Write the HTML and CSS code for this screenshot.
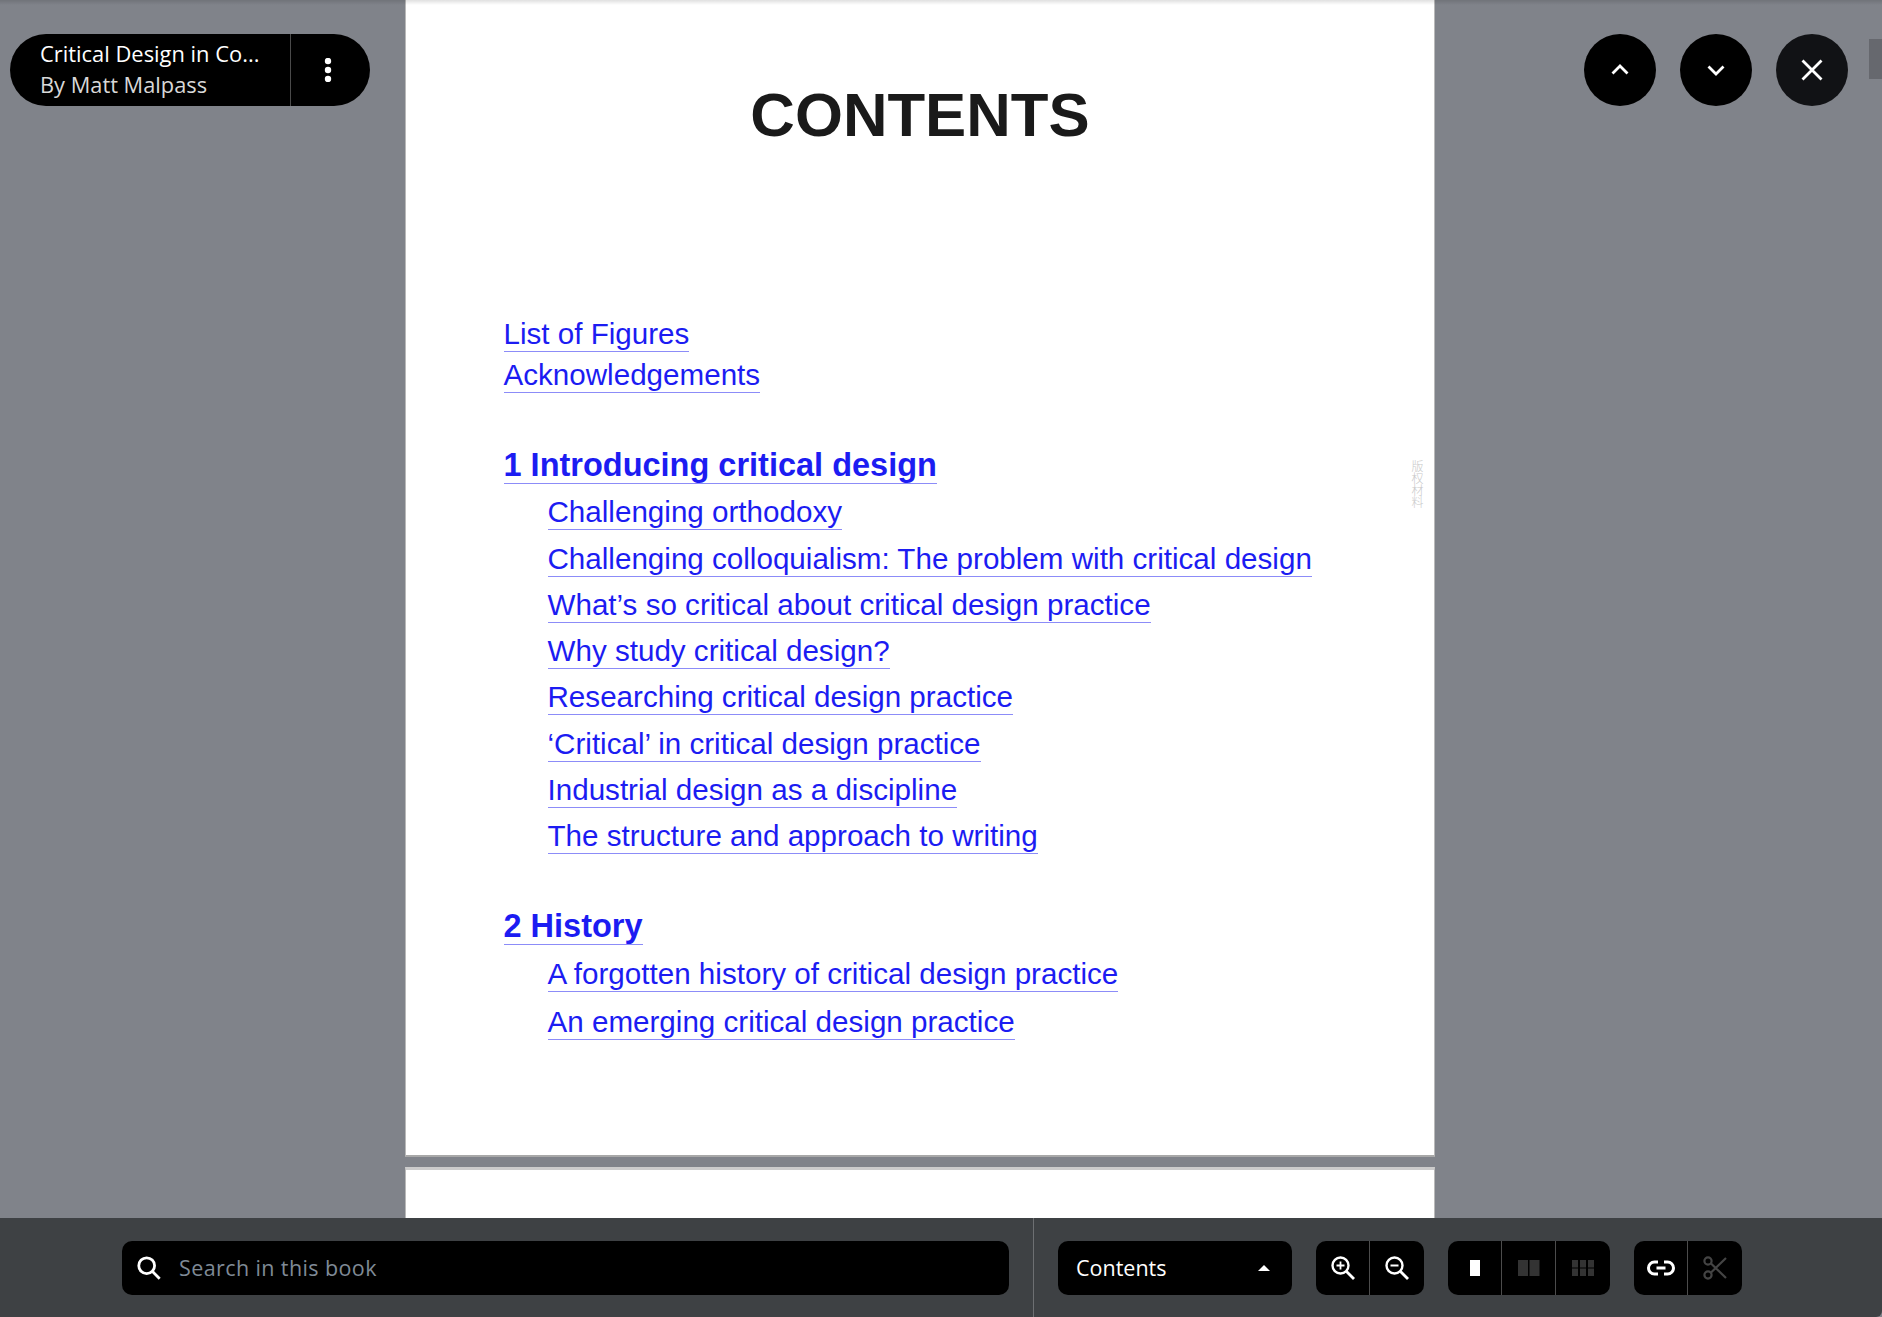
FILE: index.html
```html
<!DOCTYPE html>
<html lang="en">
<head>
<meta charset="utf-8">
<title>Critical Design in Context</title>
<link rel="stylesheet" href="styles.css">
</head>
<body>
<div class="viewer">
  <main class="stage">
    <section class="page page-first">
      <h1 class="title">CONTENTS</h1>
      <nav class="toc">
        <div class="front">
          <a class="link" href="#">List of Figures</a>
          <a class="link" href="#">Acknowledgements</a>
        </div>
        <div class="chapter chapter-one">
          <a class="link chap" href="#">1 Introducing critical design</a>
          <a class="link sub" href="#">Challenging orthodoxy</a>
          <a class="link sub" href="#">Challenging colloquialism: The problem with critical design</a>
          <a class="link sub" href="#">What’s so critical about critical design practice</a>
          <a class="link sub" href="#">Why study critical design?</a>
          <a class="link sub" href="#">Researching critical design practice</a>
          <a class="link sub" href="#">‘Critical’ in critical design practice</a>
          <a class="link sub" href="#">Industrial design as a discipline</a>
          <a class="link sub" href="#">The structure and approach to writing</a>
        </div>
        <div class="chapter chapter-two">
          <a class="link chap" href="#">2 History</a>
          <a class="link sub" href="#">A forgotten history of critical design practice</a>
          <a class="link sub" href="#">An emerging critical design practice</a>
        </div>
      </nav>
      <span class="watermark">版权材料</span>
    </section>
    <section class="page page-next"></section>

    <div class="book-pill">
      <div class="book-info">
        <div class="book-title">Critical Design in Co...</div>
        <div class="book-author">By Matt Malpass</div>
      </div>
      <button class="pill-menu" aria-label="More">
        <svg width="24" height="24" viewBox="0 0 24 24"><circle cx="12" cy="3" r="3.200" class="dot"/><circle cx="12" cy="12" r="3.200" class="dot"/><circle cx="12" cy="21" r="3.200" class="dot"/></svg>
      </button>
    </div>

    <div class="round-buttons">
      <button class="round" aria-label="Previous">
        <svg width="24" height="24" viewBox="0 0 24 24"><path d="M4.500 15.500l7.500-7.500 7.500 7.500" class="stroke" stroke-width="2.800"/></svg>
      </button>
      <button class="round" aria-label="Next">
        <svg width="24" height="24" viewBox="0 0 24 24"><path d="M4.500 8.500l7.500 7.500 7.500-7.500" class="stroke" stroke-width="2.800"/></svg>
      </button>
      <button class="round round-close" aria-label="Close">
        <svg width="24" height="24" viewBox="0 0 24 24"><path d="M2.500 2.500l19 19M21.500 2.500l-19 19" class="stroke" stroke-width="2.800"/></svg>
      </button>
    </div>
    <div class="scroll-thumb"></div>
  </main>

  <footer class="bar">
    <div class="search">
      <svg width="26" height="26" viewBox="0 0 28 28"><circle cx="11.500" cy="11.500" r="8.500" class="stroke" stroke-width="3"/><path d="M17.500 17.500L25.500 25.500" class="stroke" stroke-width="3"/></svg>
      <span class="search-text">Search in this book</span>
    </div>
    <div class="bar-divider"></div>
    <div class="select">
      <span>Contents</span>
      <span class="caret"></span>
    </div>
    <div class="group">
      <button class="tool" aria-label="Zoom in">
        <svg width="24" height="24" viewBox="0 0 24 24"><circle cx="9.500" cy="9.500" r="8" class="stroke" stroke-width="2.400"/><path d="M15.500 15.500L23 23" class="stroke" stroke-width="2.800"/><path d="M9.500 5.500v8M5.500 9.500h8" class="stroke" stroke-width="1.800"/></svg>
      </button>
      <button class="tool" aria-label="Zoom out">
        <svg width="24" height="24" viewBox="0 0 24 24"><circle cx="9.500" cy="9.500" r="8" class="stroke" stroke-width="2.400"/><path d="M15.500 15.500L23 23" class="stroke" stroke-width="2.800"/><path d="M5.500 9.500h8" class="stroke" stroke-width="2"/></svg>
      </button>
    </div>
    <div class="group">
      <button class="tool" aria-label="Single page">
        <svg width="22" height="18" viewBox="0 0 22 18"><rect x="6" y="1" width="10" height="16" fill="#fff"/></svg>
      </button>
      <button class="tool" aria-label="Two pages">
        <svg width="22" height="18" viewBox="0 0 22 18"><rect x="0" y="1" width="10" height="16" class="dim"/><rect x="11.500" y="1" width="10" height="16" class="dim"/></svg>
      </button>
      <button class="tool" aria-label="Grid">
        <svg width="22" height="18" viewBox="0 0 22 18"><rect x="0" y="1" width="6" height="7.500" class="dim"/><rect x="8" y="1" width="6" height="7.500" class="dim"/><rect x="16" y="1" width="6" height="7.500" class="dim"/><rect x="0" y="9.500" width="6" height="7.500" class="dim"/><rect x="8" y="9.500" width="6" height="7.500" class="dim"/><rect x="16" y="9.500" width="6" height="7.500" class="dim"/></svg>
      </button>
    </div>
    <div class="group">
      <button class="tool" aria-label="Copy link">
        <svg width="30" height="18" viewBox="0 0 30 18"><path d="M12 3H8.500a6 6 0 0 0 0 12H12M18 3h3.500a6 6 0 0 1 0 12H18" class="stroke" stroke-width="3"/><path d="M10.500 9h9" class="stroke" stroke-width="2.800"/></svg>
      </button>
      <button class="tool" aria-label="Clip">
        <svg width="26" height="26" viewBox="0 0 26 26"><circle cx="6" cy="6" r="3.600" class="stroke-dim" stroke-width="2.200"/><circle cx="6" cy="20" r="3.600" class="stroke-dim" stroke-width="2.200"/><path d="M9 8.500L24 23M9 17.500L24 3" class="stroke-dim" stroke-width="2.200"/></svg>
      </button>
    </div>
  </footer>
</div>
</body>
</html>
```
FILE: styles.css
```css
* { box-sizing: border-box; }
html, body { margin: 0; height: 100%; }
body { overflow: hidden; font-family: "Open Sans", "Noto Sans", sans-serif; }

.viewer { display: flex; flex-direction: column; height: 1317px; background: #80838a; }

.stage { position: relative; flex: 1; min-height: 0; overflow: hidden; display: flex; flex-direction: column; align-items: flex-start; padding-left: 405px; }
.stage::after { content: ""; position: absolute; left: 0; right: 0; top: 0; height: 5px; background: linear-gradient(rgba(0, 0, 0, 0.12), rgba(0, 0, 0, 0)); }
.page { flex: none; width: 1030px; background: #fff; border-left: 1px solid #b9b9b9; border-right: 1px solid #b9b9b9; position: relative; }
.page-first { height: 1157px; border-bottom: 2px solid #a8a8a8; padding: 84px 0 0 97.500px; }
.page-next { height: 60px; margin-top: 10px; border-top: 3px solid #cccccc; }

.title { margin: 0 0 0 -97.500px; text-align: center; font: 700 61.700px/62px "Liberation Sans", Arial, sans-serif; color: #1a1a1a; }

.toc { display: flex; flex-direction: column; margin-top: 171px; font-family: "Liberation Sans", Arial, sans-serif; }
.front { display: flex; flex-direction: column; align-items: flex-start; gap: 6px; }
.chapter { display: flex; flex-direction: column; align-items: flex-start; }
.chapter-one { margin-top: 54px; }
.chapter-two { margin-top: 54px; }
.link { display: block; color: #1c1cf2; text-decoration: none; font-size: 29.600px; line-height: 34px; border-bottom: 1px solid #8c8cf8; white-space: nowrap; }
.chap { font-weight: 700; font-size: 32.500px; line-height: 36px; }
.sub { margin-left: 44px; margin-top: 11.300px; }
.chapter-two .sub:last-child { margin-top: 13.500px; }
.watermark { position: absolute; left: 1005px; top: 460px; writing-mode: vertical-rl; font: 300 12px/12px "Noto Sans CJK SC", sans-serif; color: #c8c8c8; }

.book-pill { position: absolute; left: 10px; top: 34px; width: 360px; height: 72px; background: #000; border-radius: 36px; display: flex; color: #fff; }
.book-info { width: 281px; padding: 5px 0 0 30px; border-right: 1px solid #4a4a4a; }
.book-title { font-size: 21.900px; line-height: 30.500px; white-space: nowrap; }
.book-author { font-size: 21.800px; line-height: 30.500px; color: #d8d8d8; }
.pill-menu { flex: 1; background: none; border: 0; padding: 0 6px 0 0; display: flex; align-items: center; justify-content: center; }
.dot { fill: #fff; }

.round-buttons { position: absolute; left: 1584px; top: 34px; display: flex; gap: 24px; }
.round { width: 72px; height: 72px; border-radius: 50%; background: #000; border: 0; padding: 0; display: flex; align-items: center; justify-content: center; }
.round-close { background: #111215; }
.stroke { fill: none; stroke: #fff; }
.stroke-dim { fill: none; stroke: #444; }
.dim { fill: #333; }
.scroll-thumb { position: absolute; right: 0; top: 39px; width: 13px; height: 40px; background: #66686e; }

.bar { flex: none; height: 99px; background: #3e4144; display: flex; align-items: center; padding-left: 122px; border-bottom-right-radius: 6px; }
.search { width: 887px; height: 54px; background: #000; border-radius: 10px; display: flex; align-items: center; gap: 17px; padding-left: 14px; }
.search-text { color: #7f8a96; font-size: 21.500px; letter-spacing: 0.400px; }
.bar-divider { width: 1px; height: 99px; background: #6d6f72; margin: 0 24px; }
.select { width: 234px; height: 54px; background: #000; border-radius: 10px; color: #fff; font-size: 21.500px; display: flex; align-items: center; justify-content: space-between; padding: 0 22px 0 18px; }
.caret { width: 0; height: 0; border-left: 6px solid transparent; border-right: 6px solid transparent; border-bottom: 6px solid #fff; }
.group { height: 54px; margin-left: 24px; background: #000; border-radius: 10px; display: flex; overflow: hidden; }
.tool { width: 54px; height: 54px; background: none; border: 0; border-right: 1px solid #4c4c4c; padding: 0; display: flex; align-items: center; justify-content: center; }
.tool:last-child { border-right: 0; }
```
